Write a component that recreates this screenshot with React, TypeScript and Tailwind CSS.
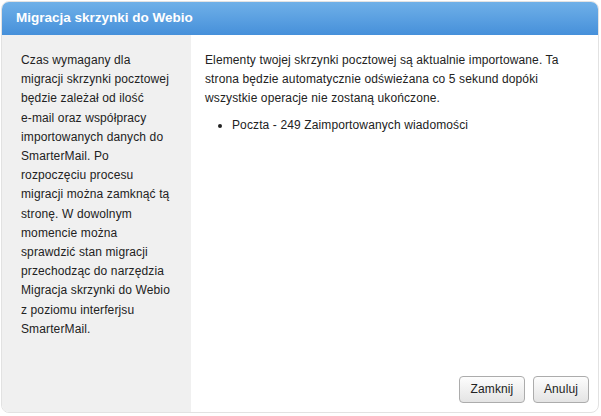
export default function App() {
  return (
    <div className="w-[601px] h-[416px] bg-white pt-px pl-px" style={{ fontFamily: '"Liberation Sans", Arial, sans-serif' }}>
      <div className="w-[598px] h-[412px] flex flex-col rounded-[8px] border border-[#e2e2e2] overflow-hidden bg-white">
        <div className="h-[33px] shrink-0 flex items-center pl-[14px] bg-gradient-to-b from-[#6fb0e8] to-[#4690da] text-white font-bold text-[13.5px]">
          Migracja skrzynki do Webio
        </div>
        <div className="flex flex-1 min-h-0">
          <div className="w-[189px] shrink-0 bg-[#f0f0f0] pl-[19px] pr-[20px] pt-[16px] text-[12px] leading-[19.2px] tracking-[0.12px] text-[#222]">
            Czas wymagany dla migracji skrzynki pocztowej będzie zależał od ilość <span className="whitespace-nowrap">e-mail</span> oraz współpracy importowanych danych do SmarterMail. Po rozpoczęciu procesu migracji można zamknąć tą stronę. W dowolnym momencie można sprawdzić stan migracji przechodząc do narzędzia Migracja skrzynki do Webio z poziomu interferjsu SmarterMail.
          </div>
          <div className="flex-1 flex flex-col pl-[14px] pr-[9px] pt-[16px] pb-[9px] text-[12px] leading-[19.2px] tracking-[0.12px] text-[#222]">
            <p className="mb-[7px] pr-[5px]">
              Elementy twojej skrzynki pocztowej są aktualnie importowane. Ta strona będzie automatycznie odświeżana co 5 sekund dopóki wszystkie operacje nie zostaną ukończone.
            </p>
            <ul className="list-disc pl-[27px]">
              <li>Poczta - 249 Zaimportowanych wiadomości</li>
            </ul>
            <div className="mt-auto flex justify-end gap-[8px]">
              <button className="h-[27px] w-[66px] rounded-[4px] border border-[#acacac] bg-gradient-to-b from-[#fdfdfd] to-[#e4e4e4] text-[12px] text-[#222]">Zamknij</button>
              <button className="h-[27px] w-[56px] rounded-[4px] border border-[#acacac] bg-gradient-to-b from-[#fdfdfd] to-[#e4e4e4] text-[12px] text-[#222]">Anuluj</button>
            </div>
          </div>
        </div>
      </div>
    </div>
  );
}
